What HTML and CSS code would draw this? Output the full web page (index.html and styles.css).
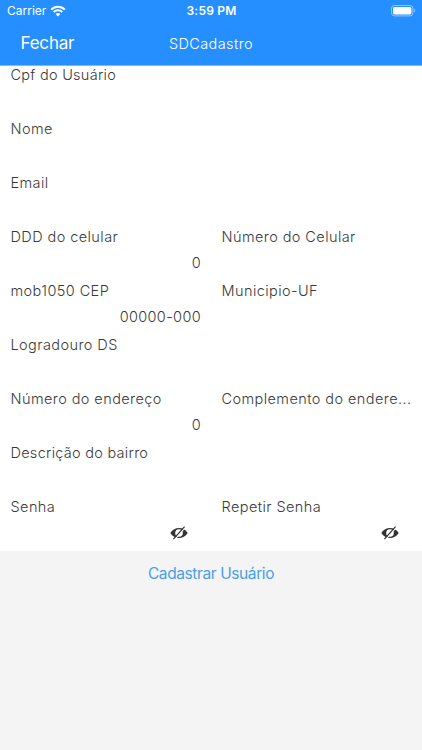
FILE: index.html
```html
<!DOCTYPE html>
<html lang="pt-BR">
<head>
  <meta charset="UTF-8" />
  <meta name="viewport" content="width=device-width, initial-scale=1" />
  <title>SDCadastro</title>
  <link rel="stylesheet" href="styles.css">
</head>
<body>
  <header>
    <div class="status">
      <div class="carrier">
        <span>Carrier</span>
        <svg class="wifi" viewBox="0 0 16 12">
          <path d="M1.2 4.6a9.6 9.6 0 0 1 13.6 0M3.7 7.1a6.1 6.1 0 0 1 8.6 0" fill="none" stroke="#fff" stroke-width="2"/>
          <path d="M8 11.6 5.6 9.1a3.4 3.4 0 0 1 4.8 0z" fill="#fff"/>
        </svg>
      </div>
      <div class="time">3:59 PM</div>
      <svg class="battery" viewBox="0 0 25 12">
        <rect x=".5" y=".5" width="21.4" height="10.4" rx="3" fill="none" stroke="#fff" stroke-opacity=".5"/>
        <rect x="2" y="2" width="18.4" height="7.4" rx="1.6" fill="#fff"/>
        <path d="M23.2 4v3.6c1.5-.6 1.5-3 0-3.6z" fill="#fff" fill-opacity=".5"/>
      </svg>
    </div>
    <nav>
      <a class="close">Fechar</a>
      <h1 class="title">SDCadastro</h1>
    </nav>
  </header>

  <form class="form">
    <div class="field wide"><label class="tight">Cpf do Usuário</label></div>
    <div class="field wide"><label>Nome</label></div>
    <div class="field wide"><label>Email</label></div>
    <div class="field"><label>DDD do celular</label><div class="value">0</div></div>
    <div class="field"><label>Número do Celular</label></div>
    <div class="field"><label>mob1050 CEP</label><div class="value">00000-000</div></div>
    <div class="field"><label>Municipio-UF</label></div>
    <div class="field wide"><label>Logradouro DS</label></div>
    <div class="field"><label>Número do endereço</label><div class="value">0</div></div>
    <div class="field"><label>Complemento do endere...</label></div>
    <div class="field wide"><label class="tight">Descrição do bairro</label></div>
    <div class="field">
      <label>Senha</label>
      <div class="value">
        <svg class="eye" viewBox="0 0 18 14">
          <path d="M.3 7C4.4.4 13.6.4 17.7 7 13.6 13.6 4.4 13.6.3 7z" fill="#333"/>
          <circle cx="9" cy="7" r="3.8" fill="#fff"/>
          <path d="M4.4 13.8 15.6 1.2" stroke="#fff" stroke-width="1.2"/>
          <path d="M3.4 13.2 14.6.6" stroke="#333" stroke-width="1.2"/>
        </svg>
      </div>
    </div>
    <div class="field">
      <label>Repetir Senha</label>
      <div class="value">
        <svg class="eye" viewBox="0 0 18 14">
          <path d="M.3 7C4.4.4 13.6.4 17.7 7 13.6 13.6 4.4 13.6.3 7z" fill="#333"/>
          <circle cx="9" cy="7" r="3.8" fill="#fff"/>
          <path d="M4.4 13.8 15.6 1.2" stroke="#fff" stroke-width="1.2"/>
          <path d="M3.4 13.2 14.6.6" stroke="#333" stroke-width="1.2"/>
        </svg>
      </div>
    </div>
  </form>

  <a class="submit">Cadastrar Usuário</a>
</body>
</html>
```

FILE: styles.css
```css
body {
  margin: 0;
  background: #f4f4f4;
  color: #3a3a3a;
  font-family: Inter, "Liberation Sans", sans-serif;
}
header {
  height: 65px;
  background: #268fff;
  border-bottom: 1px solid #7dbcff;
  color: #fff;
}
.status {
  display: grid;
  grid-template-columns: 1fr auto 1fr;
  align-items: center;
  height: 21px;
  padding: 0 6px 0 7px;
}
.carrier {
  display: flex;
  align-items: center;
  gap: 4px;
  font-size: 12px;
}
.wifi {
  width: 16px;
  height: 12px;
}
.time {
  font-size: 12px;
  font-weight: 600;
  letter-spacing: 0.2px;
}
.battery {
  justify-self: end;
  width: 25px;
  height: 12px;
}
nav {
  display: grid;
  grid-template-columns: 1fr auto 1fr;
  align-items: center;
  height: 44px;
  padding: 0 20.5px;
}
.close {
  font-size: 17px;
  letter-spacing: -0.2px;
}
.title {
  margin: 0;
  font-size: 14.5px;
  font-weight: 300;
  letter-spacing: 0.4px;
}
.form {
  display: grid;
  grid-template-columns: repeat(2, minmax(0, 1fr));
  grid-auto-rows: 54px;
  height: 485px;
  background: #fff;
}
.field {
  padding: 0 10px 0 10.5px;
  font-size: 14.5px;
  font-weight: 350;
  letter-spacing: 0.42px;
}
.wide {
  grid-column: span 2;
}
.field label {
  display: block;
  height: 19px;
  line-height: 17px;
  white-space: nowrap;
}
.field .tight {
  letter-spacing: 0.27px;
}
.value {
  display: flex;
  justify-content: flex-end;
  align-items: center;
  height: 31px;
  letter-spacing: 0.35px;
}
.eye {
  width: 18px;
  height: 14px;
  margin-right: 13px;
}
.submit {
  display: block;
  padding-top: 12px;
  color: #4b9fe8;
  font-size: 15.5px;
  line-height: 22px;
  letter-spacing: -0.4px;
  text-align: center;
}
```
